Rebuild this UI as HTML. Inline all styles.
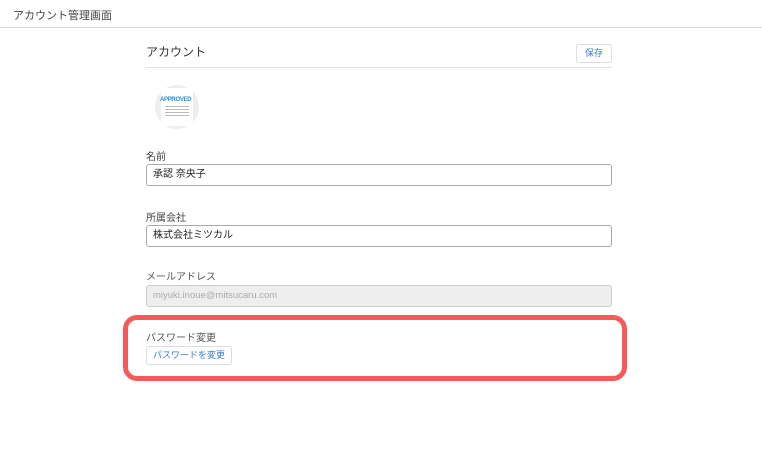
<!DOCTYPE html>
<html><head><meta charset="utf-8"><style>
*{box-sizing:border-box;margin:0;padding:0}
body{width:762px;height:466px;background:#fff;font-family:"Liberation Sans","Noto Sans CJK JP",sans-serif;color:#333;position:relative;overflow:hidden}
.a{position:absolute}
.hdr{left:0;top:0;width:762px;height:28px;border-bottom:1px solid #d6d6d6}
.lbl{font-size:10px;color:#444}
.inp{left:146px;width:466px;height:22px;border:1px solid #aaa;border-radius:3px;font-size:10px;line-height:20px;padding:0 6px;color:#222}
.btn{border:1px solid #ddd;border-radius:3px;font-size:9px;color:#3a7bd5;text-align:center;background:#fff}
</style></head><body>
<div class="a hdr"></div>
<div class="a" style="left:13px;top:7px;font-size:11px;color:#444">アカウント管理画面</div>
<div class="a" style="left:146px;top:43px;font-size:12px;color:#333">アカウント</div>
<div class="a btn" style="left:576px;top:44px;width:36px;height:19px;line-height:17px;border-width:1.5px">保存</div>
<div class="a" style="left:146px;top:67px;width:466px;height:1px;background:#e2e2e2"></div>
<div class="a" style="left:155px;top:85px;width:44px;height:44px;border-radius:50%;background:#eee;overflow:hidden">
 <div class="a" style="left:6px;top:3px;width:32px;height:38px;background:#fff"></div>
 <div class="a" style="left:5px;top:12px;font-size:6px;font-weight:bold;color:#2a8fd8;letter-spacing:-0.3px">APPROVED</div>
 <div class="a" style="left:10px;top:21px;width:24px;height:12px;background:repeating-linear-gradient(#bbb 0 1px,#fff 1px 3px)"></div>
</div>
<div class="a lbl" style="left:146px;top:148px">名前</div>
<div class="a inp" style="top:164px">承認 奈央子</div>
<div class="a lbl" style="left:146px;top:209px">所属会社</div>
<div class="a inp" style="top:225px">株式会社ミツカル</div>
<div class="a lbl" style="left:146px;top:268px;color:#555">メールアドレス</div>
<div class="a inp" style="top:285px;background:#eee;border-color:#ccc;color:#aaa;font-size:9.5px">miyuki.inoue@mitsucaru.com</div>
<div class="a" style="left:123px;top:315px;width:504px;height:66px;border:5px solid #f55a5a;border-radius:14px"></div>
<div class="a lbl" style="left:146px;top:329px;color:#555">パスワード変更</div>
<div class="a btn" style="left:146px;top:346px;width:86px;height:19px;line-height:17px">パスワードを変更</div>
</body></html>
